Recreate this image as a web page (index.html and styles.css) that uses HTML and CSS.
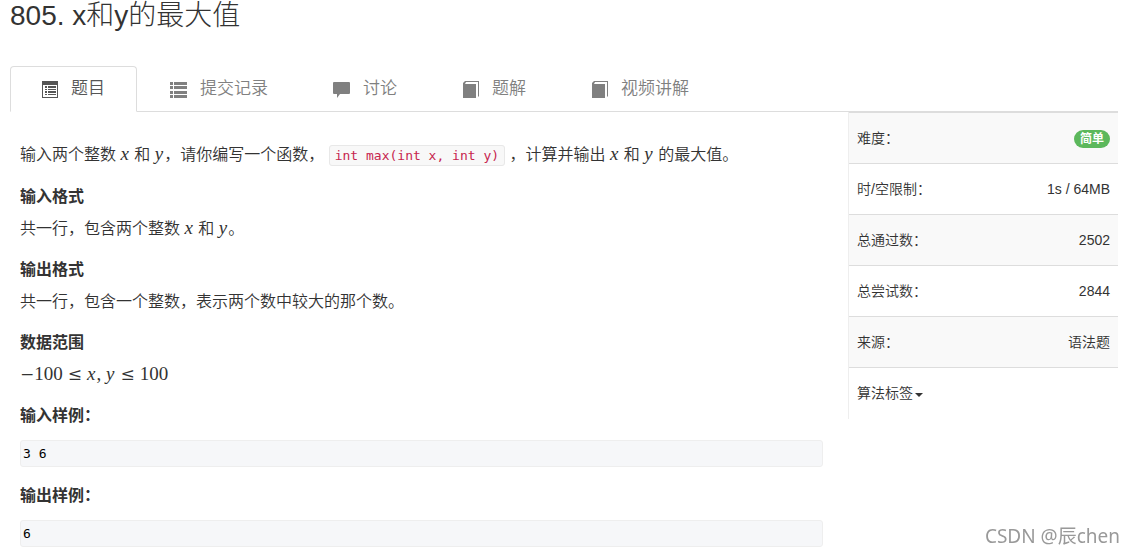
FILE: index.html
```html
<!DOCTYPE html>
<html lang="zh-CN">
<head>
    <meta charset="UTF-8">
    <meta name="viewport" content="width=device-width, initial-scale=1.0">
    <title>805. x和y的最大值</title>
    <link rel="stylesheet" href="styles.css">
</head>
<body>
    <h1 class="problem-title">805. x和y的最大值</h1>

    <!-- Tabs -->
    <nav class="tabs">
        <a class="tab active" href="#problem">
            <svg class="icon" viewBox="0 0 17 17" aria-hidden="true">
                <path fill-rule="evenodd" d="M1 0h16v17H1zM2 4v12h14V4z"/>
                <path d="M4 5h2v2H4zM7 5h8v2H7zM4 8h2v1H4zM7 8h8v1H7zM4 10h2v2H4zM7 10h8v2H7zM4 13h2v1H4zM7 13h8v1H7z"/>
            </svg>
            题目
        </a>
        <a class="tab" href="#submissions">
            <svg class="icon" viewBox="0 0 17 17" aria-hidden="true">
                <path d="M0 1h3v3H0zM4 1h13v3H4zM0 5h3v3H0zM4 5h13v3H4zM0 10h3v3H0zM4 10h13v3H4zM0 14h3v3H0zM4 14h13v3H4z"/>
            </svg>
            提交记录
        </a>
        <a class="tab" href="#discussion">
            <svg class="icon" viewBox="0 0 17 17" aria-hidden="true">
                <path d="M1 1h15q1 0 1 1v10q0 1-1 1H7l-3 4v-4H1q-1 0-1-1V2q0-1 1-1z"/>
            </svg>
            讨论
        </a>
        <a class="tab" href="#solution">
            <svg class="icon" viewBox="0 0 17 17" aria-hidden="true">
                <path d="M1 2l2-2h14v15l-1 1V1H4L3 3h11v14H1z"/>
            </svg>
            题解
        </a>
        <a class="tab" href="#video">
            <svg class="icon" viewBox="0 0 17 17" aria-hidden="true">
                <path d="M1 2l2-2h14v15l-1 1V1H4L3 3h11v14H1z"/>
            </svg>
            视频讲解
        </a>
    </nav>

    <div class="main">
        <!-- Problem statement -->
        <article class="statement" id="problem">
            <p>输入两个整数 <i class="math">x</i> 和 <i class="math">y</i>，请你编写一个函数， <code>int max(int x, int y)</code> ，计算并输出 <i class="math">x</i> 和 <i class="math">y</i> 的最大值。</p>

            <h4>输入格式</h4>
            <p>共一行，包含两个整数 <i class="math">x</i> 和 <i class="math">y</i>。</p>

            <h4>输出格式</h4>
            <p>共一行，包含一个整数，表示两个数中较大的那个数。</p>

            <h4>数据范围</h4>
            <p><span class="math"><span class="sign">−</span>100<span class="relation">≤</span><i>x</i>, <i>y</i><span class="relation">≤</span>100</span></p>

            <h4>输入样例：</h4>
            <pre>3 6</pre>

            <h4>输出样例：</h4>
            <pre>6</pre>
        </article>

        <!-- Problem info -->
        <aside class="sidebar">
            <table class="info">
                <tbody>
                    <tr>
                        <th scope="row">难度：</th>
                        <td><span class="badge">简单</span></td>
                    </tr>
                    <tr>
                        <th scope="row">时/空限制：</th>
                        <td>1s / 64MB</td>
                    </tr>
                    <tr>
                        <th scope="row">总通过数：</th>
                        <td>2502</td>
                    </tr>
                    <tr>
                        <th scope="row">总尝试数：</th>
                        <td>2844</td>
                    </tr>
                    <tr>
                        <th scope="row">来源：</th>
                        <td>语法题</td>
                    </tr>
                    <tr>
                        <th scope="row" colspan="2"><button class="tags-button" type="button">算法标签<span class="caret"></span></button></th>
                    </tr>
                </tbody>
            </table>
        </aside>
    </div>

    <div class="watermark">CSDN @辰chen</div>
</body>
</html>
```

FILE: styles.css
```css
* {
    box-sizing: border-box;
}

body {
    margin: 0;
    padding: 0 6px 0 10px;
    font-family: "Liberation Sans", "Noto Sans CJK SC", sans-serif;
    font-size: 14px;
    font-weight: 350;
    line-height: 20px;
    color: #333;
    background-color: #fff;
}

.problem-title {
    margin: 0 0 35px;
    font-size: 28px;
    font-weight: 300;
    line-height: 31px;
}

/* Tabs */
.tabs {
    display: flex;
    gap: 2px;
    border-bottom: 1px solid #ddd;
}

.tab {
    display: flex;
    align-items: center;
    gap: 13px;
    height: 46px;
    margin-bottom: -1px;
    padding: 0 31px 0 30px;
    border: 1px solid transparent;
    border-radius: 4px 4px 0 0;
    font-size: 17px;
    color: #808080;
    text-decoration: none;
}

.tab.active {
    color: #555;
    background-color: #fff;
    border-color: #ddd;
    border-bottom-color: #fff;
}

.icon {
    width: 17px;
    height: 17px;
    fill: currentColor;
}

.main {
    display: flex;
    align-items: flex-start;
}

/* Statement */
.statement {
    flex: 1;
    padding: 32px 25px 0 10px;
    font-size: 16px;
    line-height: 22px;
}

.statement p {
    margin: 0 0 19px;
}

.statement h4 {
    margin: 0 0 10px;
    font-size: 16px;
    font-weight: bold;
    line-height: 22px;
}

.math {
    font-family: "Liberation Serif", serif;
    font-size: 19px;
    line-height: 20px;
}

.statement i {
    margin-right: 1px;
}

.sign,
.relation {
    font-family: "DejaVu Serif", serif;
    font-size: 17px;
}

.relation {
    margin: 0 5px;
}

code {
    padding: 2px 5px;
    border: 1px solid #e8e8e8;
    border-radius: 3px;
    font-family: "DejaVu Sans Mono", monospace;
    font-size: 13px;
    color: #c7254e;
    background-color: #f8f8f8;
}

pre {
    margin: 13px 0 18px;
    padding: 2px;
    border: 1px solid #eee;
    border-radius: 3px;
    font-family: "DejaVu Sans Mono", monospace;
    font-size: 13px;
    line-height: 21px;
    color: #000;
    background-color: #f6f7f9;
}

pre:last-child {
    margin-bottom: 0;
}

/* Sidebar */
.sidebar {
    flex: 0 0 270px;
    border-left: 1px solid #eee;
}

.info {
    width: 100%;
    border-collapse: collapse;
}

.info th,
.info td {
    height: 51px;
    padding: 0 8px;
    border-top: 1px solid #ddd;
    font-weight: 350;
    text-align: left;
}

.info td {
    text-align: right;
}

.info tr:nth-child(odd) {
    background-color: #f9f9f9;
}

.badge {
    display: inline-block;
    padding: 0 6px;
    border-radius: 9px;
    font-size: 12px;
    font-weight: bold;
    line-height: 18px;
    color: #fff;
    background-color: #5cb85c;
}

.tags-button {
    padding: 0;
    border: none;
    font: inherit;
    color: inherit;
    background: none;
    cursor: pointer;
}

.caret {
    display: inline-block;
    margin-left: 2px;
    border-top: 4px solid #333;
    border-right: 4px solid transparent;
    border-left: 4px solid transparent;
    vertical-align: middle;
}

.watermark {
    position: fixed;
    right: 4px;
    bottom: 2px;
    font-family: "Noto Sans", "Noto Sans CJK SC", sans-serif;
    font-size: 19px;
    font-weight: 400;
    line-height: 24px;
    color: #999;
}
```
